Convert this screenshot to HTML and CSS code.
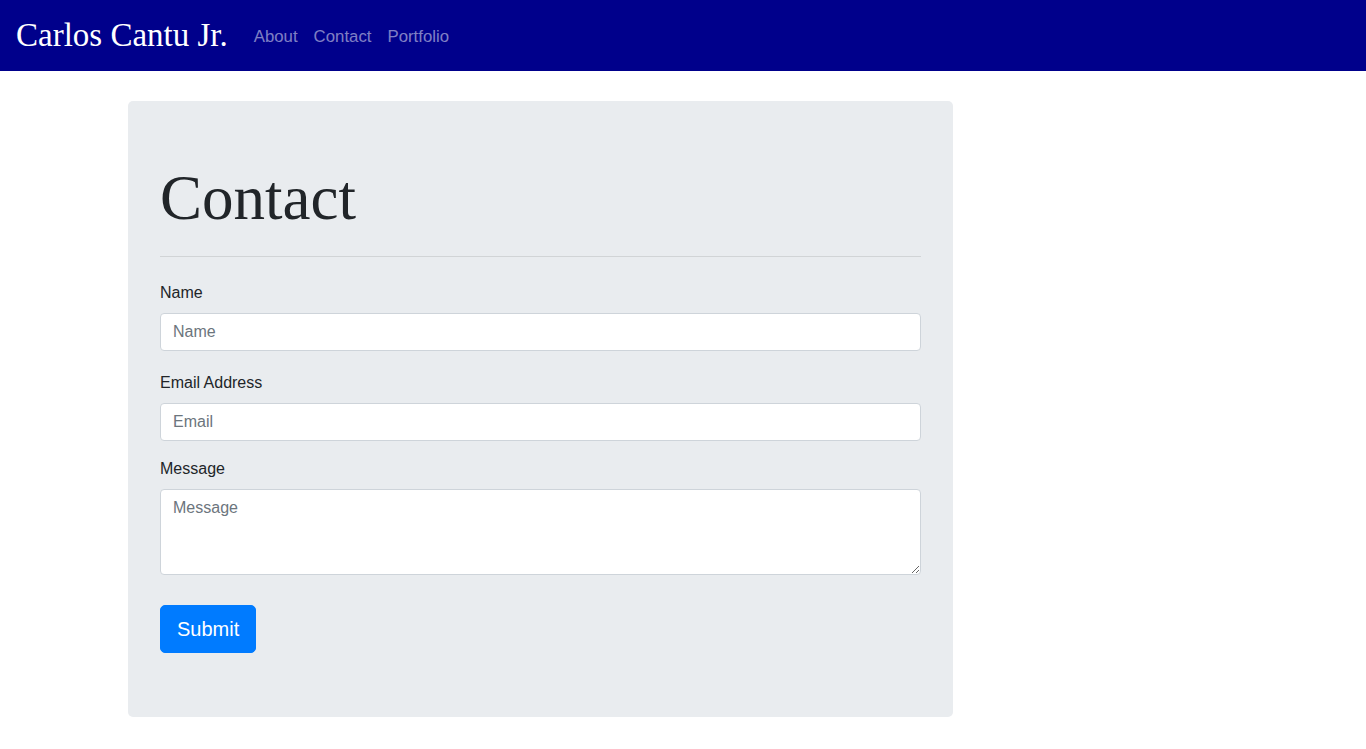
FILE: index.html
```html
<!DOCTYPE html>
<html lang="en">
<head>
<meta charset="utf-8">
<title>Contact - Carlos Cantu Jr.</title>
<link rel="stylesheet" href="styles.css">
</head>
<body>
<nav class="navbar">
  <a class="brand" href="#">Carlos Cantu Jr.</a>
  <ul class="nav-links">
    <li><a href="#">About</a></li>
    <li><a href="#">Contact</a></li>
    <li><a href="#">Portfolio</a></li>
  </ul>
</nav>
<main class="container">
  <section class="jumbotron">
    <h1 class="display">Contact</h1>
    <hr class="divider">
    <form class="contact-form">
      <div class="form-group group-name">
        <label class="label" for="name">Name</label>
        <input class="form-control" id="name" type="text" placeholder="Name">
      </div>
      <div class="form-group group-email">
        <label class="label" for="email">Email Address</label>
        <input class="form-control" id="email" type="email" placeholder="Email">
      </div>
      <div class="form-group group-msg">
        <label class="label" for="message">Message</label>
        <textarea class="form-control textarea" id="message" rows="3" placeholder="Message"></textarea>
      </div>
      <button class="btn-submit" type="submit">Submit</button>
    </form>
  </section>
</main>
</body>
</html>
```
FILE: styles.css
```css
* { box-sizing: border-box; }
body {
  margin: 0;
  font-family: "Liberation Sans", Arial, sans-serif;
  font-size: 16px;
  line-height: 1.5;
  color: #212529;
  background: #fff;
}
.navbar {
  display: flex;
  align-items: center;
  height: 71px;
  padding: 0 16px;
  background: #00008b;
}
.brand {
  font-family: "Liberation Serif", "Times New Roman", serif;
  font-size: 33px;
  color: #fff;
  text-decoration: none;
  margin-right: 18px;
  line-height: 1;
}
.nav-links {
  display: flex;
  list-style: none;
  margin: 0;
  padding: 2px 0 0;
}
.nav-links a {
  display: block;
  padding: 8px;
  color: rgba(255, 255, 255, 0.5);
  text-decoration: none;
  font-size: 16.8px;
}
.container {
  max-width: 1140px;
  margin: 30px auto 0;
  padding: 0 15px;
}
.jumbotron {
  width: 825px;
  background: #e9ecef;
  border-radius: 5px;
  padding: 64px 32px;
}
.display {
  font-family: "Liberation Serif", "Times New Roman", serif;
  font-weight: 400;
  font-size: 63px;
  line-height: 67px;
  margin: 0 0 8px;
}
.divider {
  border: 0;
  border-top: 1px solid rgba(0, 0, 0, 0.1);
  margin: 24px 0;
}
.label {
  display: block;
  margin-bottom: 8px;
  line-height: 24px;
}
.group-name { margin-bottom: 20px; }
.group-email { margin-bottom: 16px; }
.group-msg { margin-bottom: 30px; }
.form-control {
  display: block;
  width: 100%;
  height: 38px;
  padding: 6px 12px;
  font-family: inherit;
  font-size: 16px;
  line-height: 24px;
  color: #495057;
  background: #fff;
  border: 1px solid #ced4da;
  border-radius: 4px;
}
.form-control::placeholder { color: #6c757d; opacity: 1; }
.textarea { height: 86px; resize: vertical; }
.btn-submit {
  display: block;
  width: 96px;
  height: 48px;
  padding: 8px 16px;
  font-family: inherit;
  font-size: 20px;
  line-height: 30px;
  color: #fff;
  background: #007bff;
  border: 1px solid #007bff;
  border-radius: 5px;
}
```
